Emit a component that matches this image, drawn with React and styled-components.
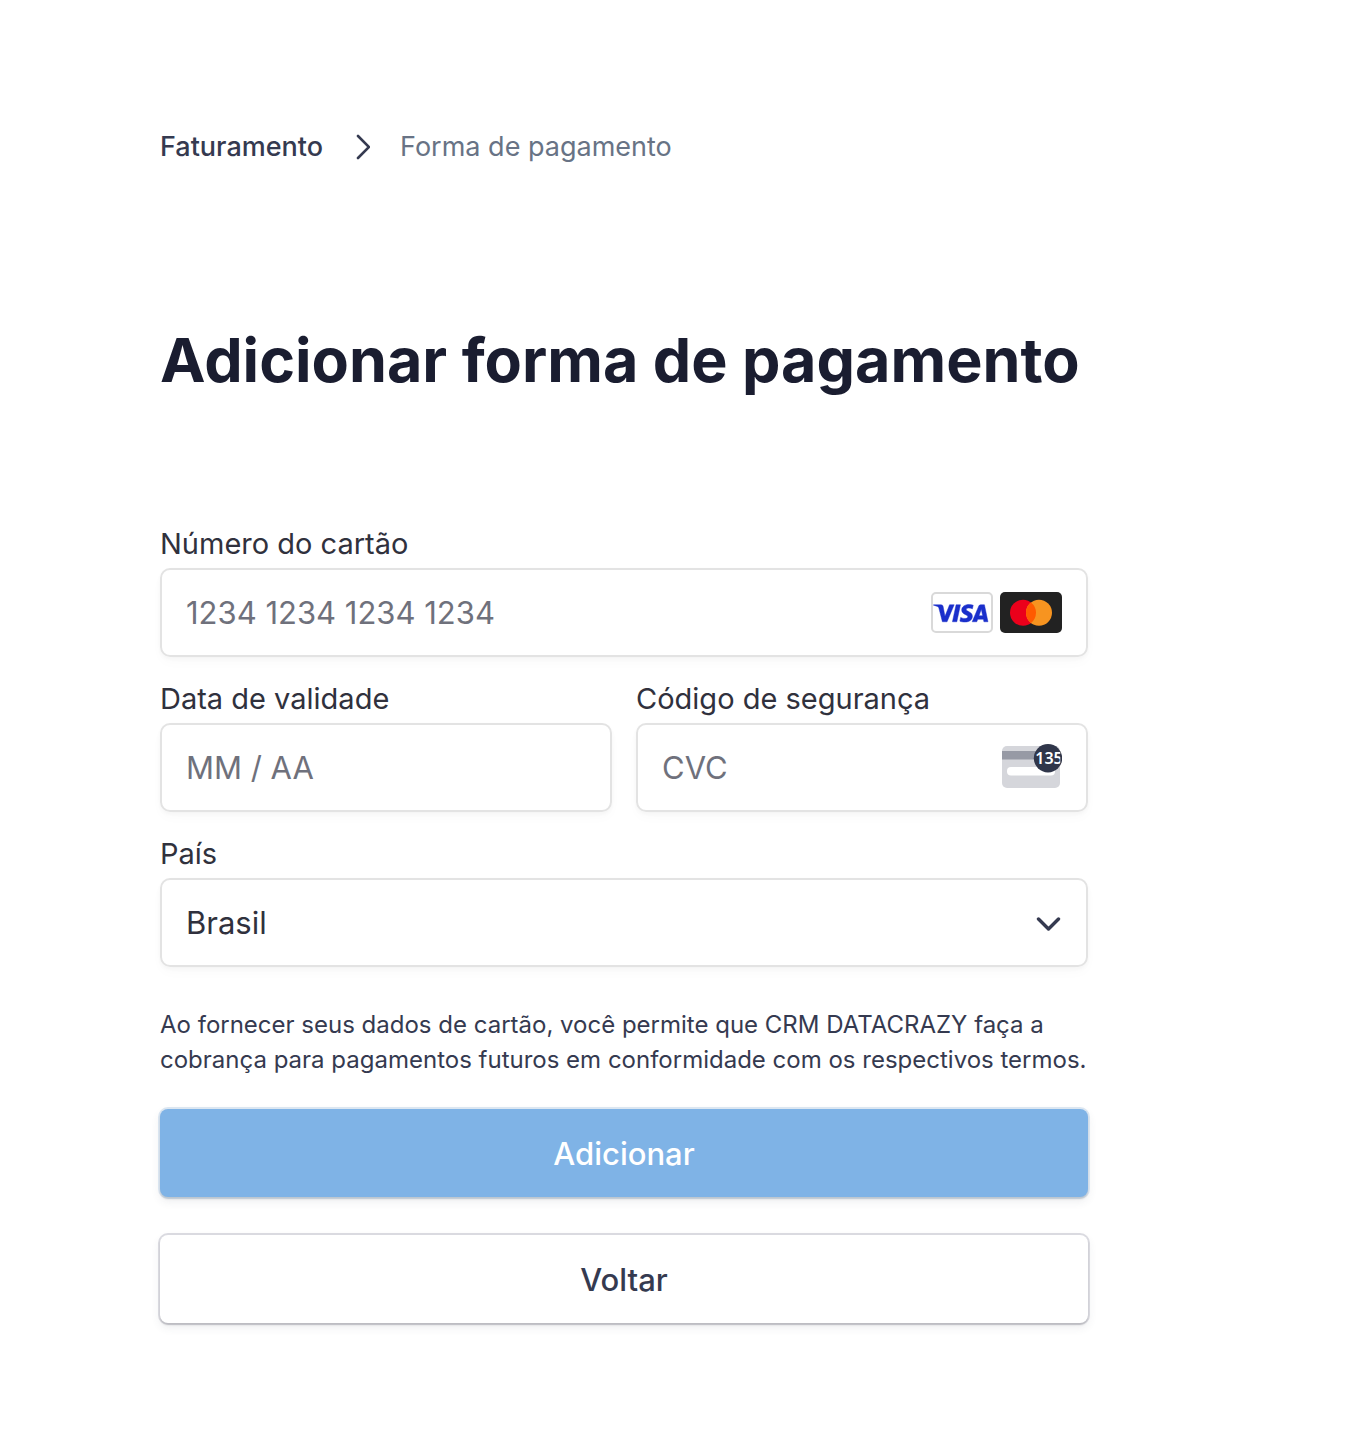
import React from "react";
import styled, { createGlobalStyle } from "styled-components";

const GlobalStyle = createGlobalStyle`
  *, *::before, *::after { box-sizing: border-box; }
  body { margin: 0; background: #fff; font-family: Inter, "Liberation Sans", sans-serif; color: #30313d; }
`;

const Page = styled.main`
  padding: 129px 160px 112px;
`;

const Breadcrumb = styled.nav`
  display: flex;
  align-items: center;
  gap: 30px;
  font-size: 27px;
  line-height: 36px;
  color: #687385;
`;

const Crumb = styled.a`
  color: #353a50;
  font-weight: 500;
  text-decoration: none;
`;

const Title = styled.h1`
  margin: 155px 0 0;
  font-size: 61px;
  line-height: 80px;
  font-weight: 700;
  color: #1a1d30;
`;

const Form = styled.form`
  max-width: 928px;
  margin-top: 126px;
`;

const Fields = styled.div`
  display: grid;
  grid-template-columns: 1fr 1fr;
  gap: 24px;
`;

const Field = styled.div`
  grid-column: ${(p) => (p.$wide ? "1 / -1" : "auto")};
  min-width: 0;
`;

const Label = styled.label`
  display: block;
  margin-bottom: 6px;
  font-size: 29px;
  line-height: 36px;
`;

const Box = styled.div`
  display: flex;
  align-items: center;
  height: 89px;
  padding: 0 24px;
  border: 2px solid #e3e3e3;
  border-radius: 10px;
  box-shadow: 0 2px 4px rgba(0, 0, 0, 0.03), 0 6px 12px rgba(0, 0, 0, 0.02);
`;

const Input = styled.input`
  flex: 1;
  min-width: 0;
  padding: 0;
  border: 0;
  outline: 0;
  background: transparent;
  font: inherit;
  font-size: 31px;
  color: inherit;
  &::placeholder { color: #6f717c; opacity: 1; }
`;

const Select = styled.select`
  flex: 1;
  min-width: 0;
  padding: 0;
  border: 0;
  outline: 0;
  appearance: none;
  background: transparent;
  font: inherit;
  font-size: 31px;
  color: inherit;
`;

const Cards = styled.div`
  display: flex;
  gap: 7px;
`;

const Terms = styled.p`
  margin: 40px 0 32px;
  font-size: 24px;
  line-height: 35px;
  color: #353a50;
`;

const Button = styled.button`
  display: block;
  width: 100%;
  height: 88px;
  padding: 0;
  border: 0;
  border-radius: 8px;
  background: ${(p) => (p.$primary ? "#7fb3e6" : "#fff")};
  color: ${(p) => (p.$primary ? "#fff" : "#353a50")};
  font: inherit;
  font-size: 31px;
  font-weight: 500;
  box-shadow:
    0 2px 2px rgba(0, 0, 0, 0.14),
    0 0 0 2px ${(p) => (p.$primary ? "#dbe6f1" : "#dadae0")},
    0 4px 10px rgba(60, 66, 87, 0.1);

  & + & { margin-top: 38px; }
`;

const Visa = () => (
  <svg width="62" height="41" viewBox="0 0 62 41" role="img" aria-label="Visa">
    <rect x="1" y="1" width="60" height="39" rx="4" fill="#fff" stroke="#d9d9d9" strokeWidth="2" />
    <path
      transform="translate(2.500 -6) scale(2.270)"
      fill="#1a2fcb"
      stroke="#1a2fcb"
      strokeWidth="0.2"
      d="M9.112 8.262L5.970 15.758H3.920L2.374 9.775c-.094-.368-.175-.503-.461-.658C1.447 8.864.677 8.627 0 8.479l.046-.217h3.300a.904.904 0 0 1 .894.764l.817 4.338 2.018-5.102zm8.033 5.049c.008-1.979-2.736-2.088-2.717-2.972.006-.269.262-.555.822-.628a3.660 3.660 0 0 1 1.913.336l.340-1.590a5.207 5.207 0 0 0-1.814-.333c-1.917 0-3.266 1.020-3.278 2.479-.012 1.079.963 1.680 1.698 2.040.756.367 1.010.603 1.006.931-.005.504-.602.725-1.160.734-.975.015-1.540-.263-1.992-.473l-.351 1.642c.453.208 1.289.390 2.156.398 2.037 0 3.370-1.006 3.377-2.564m5.061 2.447H24l-1.565-7.496h-1.656a.883.883 0 0 0-.826.550l-2.909 6.946h2.036l.405-1.120h2.488zm-2.163-2.656l1.020-2.815.588 2.815zm-8.160-4.840l-1.603 7.496H8.340l1.605-7.496z"
    />
  </svg>
);

const Mastercard = () => (
  <svg width="62" height="41" viewBox="0 0 62 41" role="img" aria-label="Mastercard">
    <rect width="62" height="41" rx="5" fill="#222" />
    <circle cx="23" cy="20.700" r="13" fill="#eb001b" />
    <circle cx="39" cy="20.700" r="13" fill="#f79420" />
    <path fill="#ff5a00" d="M31 10.450a13 13 0 0 1 0 20.500a13 13 0 0 1 0-20.500z" />
  </svg>
);

const CvcIcon = () => (
  <svg width="60" height="47" viewBox="0 0 60 47" aria-hidden="true">
    <defs>
      <clipPath id="digits"><path d="M32 0h26.300v29H32z" /></clipPath>
    </defs>
    <rect y="2" width="58" height="42" rx="5" fill="#d5d6db" />
    <path fill="#979aa5" d="M0 7h40v8.500H0z" />
    <rect x="5" y="23" width="48" height="8.500" rx="4" fill="#fff" />
    <circle cx="46" cy="14.200" r="14.200" fill="#30364a" />
    <g clipPath="url(#digits)">
      <text x="47" y="20" textAnchor="middle" fontFamily="Noto Sans, sans-serif" fontSize="16" fontWeight="600" fill="#fff">135</text>
    </g>
  </svg>
);

const Chevron = ({ down }) => (
  <svg width={down ? 26 : 17} height={down ? 16 : 26} viewBox={down ? "0 0 26 16" : "0 0 17 26"} aria-hidden="true">
    <path
      d={down ? "M2.500 4L12.500 14L22.500 4" : "M5 2l11 11L5 24"}
      fill="none"
      stroke="#353a50"
      strokeWidth={down ? 3.4 : 2.6}
      strokeLinecap="round"
      strokeLinejoin={down ? "round" : "miter"}
    />
  </svg>
);

export default function App() {
  return (
    <Page>
      <GlobalStyle />
      <Breadcrumb aria-label="Navegação">
        <Crumb href="#faturamento">Faturamento</Crumb>
        <Chevron />
        <span aria-current="page">Forma de pagamento</span>
      </Breadcrumb>
      <Title>Adicionar forma de pagamento</Title>
      <Form onSubmit={(e) => e.preventDefault()}>
        <Fields>
          <Field $wide>
            <Label htmlFor="number">Número do cartão</Label>
            <Box>
              <Input id="number" inputMode="numeric" placeholder="1234 1234 1234 1234" />
              <Cards><Visa /><Mastercard /></Cards>
            </Box>
          </Field>
          <Field>
            <Label htmlFor="expiry">Data de validade</Label>
            <Box><Input id="expiry" placeholder="MM / AA" /></Box>
          </Field>
          <Field>
            <Label htmlFor="cvc">Código de segurança</Label>
            <Box><Input id="cvc" placeholder="CVC" /><CvcIcon /></Box>
          </Field>
          <Field $wide>
            <Label htmlFor="country">País</Label>
            <Box>
              <Select id="country" defaultValue="BR"><option value="BR">Brasil</option></Select>
              <Chevron down />
            </Box>
          </Field>
        </Fields>
        <Terms>
          Ao fornecer seus dados de cartão, você permite que CRM DATACRAZY faça a cobrança para pagamentos futuros em conformidade com os respectivos termos.
        </Terms>
        <Button $primary type="submit">Adicionar</Button>
        <Button type="button">Voltar</Button>
      </Form>
    </Page>
  );
}
